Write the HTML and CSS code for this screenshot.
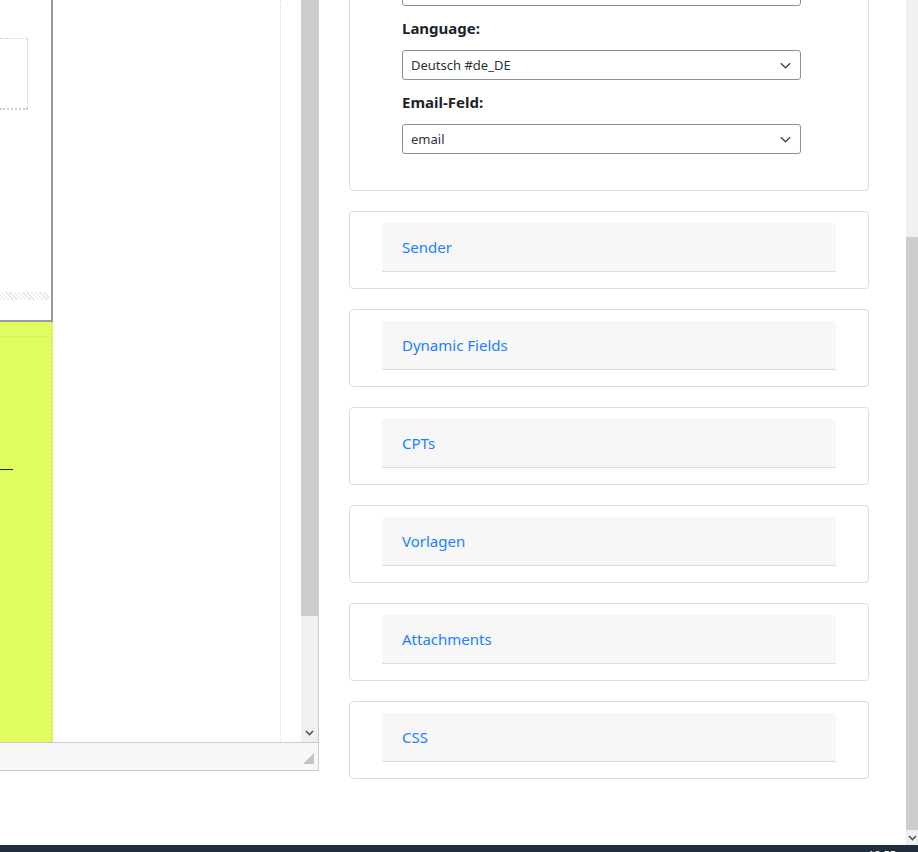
FILE: index.html
```html
<!DOCTYPE html>
<html lang="de">

<head>
    <meta charset="UTF-8">
    <meta name="viewport" content="width=device-width, initial-scale=1.0">
    <title>Newsletter Einstellungen</title>
    <link rel="stylesheet" href="styles.css">
</head>

<body>
    <div class="screen">
        <div class="workspace">
            <div class="editor">
                <div class="editor-body">
                    <div class="strip">
                        <div class="strip-top">
                            <div class="dotted-box"></div>
                            <div class="hatch"></div>
                        </div>
                        <div class="strip-yellow">
                            <div class="yellow-rule"></div>
                            <div class="ink-line"></div>
                        </div>
                    </div>
                    <div class="canvas"></div>
                    <div class="canvas-gap"></div>
                    <div class="vscroll">
                        <div class="vscroll-thumb"></div>
                        <div class="vscroll-track">
                            <svg width="9" height="6" viewBox="0 0 9 6"><path d="M1 1l3.5 3.5L8 1" fill="none" stroke="#555" stroke-width="1.6"/></svg>
                        </div>
                    </div>
                </div>
                <div class="editor-status">
                    <svg width="11" height="11" viewBox="0 0 11 11"><path d="M11 0V11H0Z" fill="#c4c4c4"/></svg>
                </div>
            </div>

            <div class="main">
                <div class="card settings">
                    <div class="select"></div>
                    <label class="field-label">Language:</label>
                    <div class="select">
                        <span>Deutsch #de_DE</span>
                        <svg width="11" height="7" viewBox="0 0 11 7"><path d="M0.8 1.2l4.7 4.6 4.7-4.6" fill="none" stroke="#444" stroke-width="1.3"/></svg>
                    </div>
                    <label class="field-label">Email-Feld:</label>
                    <div class="select">
                        <span>email</span>
                        <svg width="11" height="7" viewBox="0 0 11 7"><path d="M0.8 1.2l4.7 4.6 4.7-4.6" fill="none" stroke="#444" stroke-width="1.3"/></svg>
                    </div>
                </div>

                <div class="card panel">
                    <div class="panel-head"><a href="#">Sender</a></div>
                </div>
                <div class="card panel">
                    <div class="panel-head"><a href="#">Dynamic Fields</a></div>
                </div>
                <div class="card panel">
                    <div class="panel-head"><a href="#">CPTs</a></div>
                </div>
                <div class="card panel">
                    <div class="panel-head"><a href="#">Vorlagen</a></div>
                </div>
                <div class="card panel">
                    <div class="panel-head"><a href="#">Attachments</a></div>
                </div>
                <div class="card panel">
                    <div class="panel-head"><a href="#">CSS</a></div>
                </div>
            </div>

            <div class="page-scroll">
                <div class="page-scroll-track"></div>
                <div class="page-scroll-thumb"></div>
                <div class="page-scroll-arrow">
                    <svg width="9" height="6" viewBox="0 0 9 6"><path d="M1 1l3.5 3.5L8 1" fill="none" stroke="#555" stroke-width="1.6"/></svg>
                </div>
            </div>
        </div>
        <div class="taskbar"><span>12:55</span></div>
    </div>
</body>
</html>
```

FILE: styles.css
```css
body {
    margin: 0;
    padding: 0;
    background: #fff;
    color: #1d2327;
    font-family: "Noto Sans", "Open Sans", sans-serif;
}

.screen {
    display: flex;
    flex-direction: column;
    height: 852px;
    overflow: hidden;
}

.workspace {
    display: flex;
    flex: 1;
    min-height: 0;
}

/* left editor frame */

.editor {
    width: 318px;
    height: 771px;
    flex-shrink: 0;
    display: flex;
    flex-direction: column;
    border-right: 1px solid #ccc;
}

.editor-body {
    display: flex;
    height: 742px;
    flex-shrink: 0;
}

.strip {
    width: 53px;
    display: flex;
    flex-direction: column;
}

.strip-top {
    height: 320px;
    background: #fff;
    border-right: 2px solid #999;
    border-bottom: 2px solid #999;
    display: flex;
    flex-direction: column;
}

.dotted-box {
    width: 27px;
    height: 69px;
    margin-top: 38px;
    border-top: 1px dotted #ccc;
    border-right: 1px dotted #ccc;
    border-bottom: 2px dotted #ccc;
    box-shadow: 22px 1px 0 -21px #ddd;
}

.hatch {
    height: 8px;
    margin-top: 182px;
    margin-right: 2px;
    background: repeating-linear-gradient(45deg, #e4e4e4 0 1px, #fff 1px 3px);
}

.strip-yellow {
    flex: 1;
    background: #e0fd60;
    border-right: 2px dotted #d6e86a;
    display: flex;
    flex-direction: column;
}

.yellow-rule {
    margin-top: 14px;
    border-top: 1px dotted #cfe27a;
}

.ink-line {
    width: 13px;
    margin-top: 132px;
    border-top: 1px solid #1c2340;
}

.canvas {
    width: 227px;
    border-right: 1px dotted #ddd;
}

.canvas-gap {
    flex: 1;
}

.vscroll {
    width: 17px;
    display: flex;
    flex-direction: column;
}

.vscroll-thumb {
    height: 616px;
    background: #cdcdcd;
}

.vscroll-track {
    flex: 1;
    background: #f0f0f0;
    display: flex;
    align-items: flex-end;
    justify-content: center;
    padding-bottom: 6px;
}

.editor-status {
    height: 21px;
    flex-shrink: 0;
    background: #f7f7f7;
    border-top: 1px solid #ccc;
    border-bottom: 1px solid #ccc;
    display: flex;
    justify-content: flex-end;
    align-items: flex-end;
    padding: 0 4px 6px 0;
}

/* settings column */

.main {
    flex: 1;
    padding: 0 37px 0 30px;
    overflow: hidden;
}

.card {
    box-sizing: border-box;
    width: 520px;
    border: 1px solid #ddd;
    border-radius: 4px;
    background: #fff;
    margin-bottom: 20px;
}

.settings {
    margin-top: -35px;
    padding: 10px 0 36px 52px;
    display: flex;
    flex-direction: column;
}

.field-label {
    font-size: 15px;
    font-weight: bold;
    line-height: 22px;
    margin: 11px 0;
}

.select {
    width: 380px;
    height: 28px;
    border: 1px solid #8c8f94;
    border-radius: 3px;
    display: flex;
    align-items: center;
    justify-content: space-between;
    padding: 0 9px 0 8px;
    font-size: 13px;
    color: #2c3338;
}

.panel {
    padding: 11px 32px 16px;
}

.panel-head {
    height: 48px;
    background: #f7f7f7;
    border-bottom: 1px solid #ddd;
    border-radius: 3px 3px 0 0;
    display: flex;
    align-items: center;
    padding-left: 20px;
}

.panel-head a {
    color: #1a80ff;
    text-decoration: none;
    font-size: 15px;
}

/* page scrollbar */

.page-scroll {
    width: 12px;
    display: flex;
    flex-direction: column;
}

.page-scroll-track {
    height: 237px;
    background: #f0f0f0;
}

.page-scroll-thumb {
    height: 593px;
    background: #cdcdcd;
}

.page-scroll-arrow {
    flex: 1;
    background: #f0f0f0;
    display: flex;
    justify-content: center;
    align-items: center;
}

.taskbar {
    height: 7px;
    background: #1f2d3c;
    display: flex;
    justify-content: flex-end;
    overflow: hidden;
}

.taskbar span {
    color: #fff;
    font-size: 11px;
    line-height: 11px;
    margin: 4px 22px 0 0;
}
```
